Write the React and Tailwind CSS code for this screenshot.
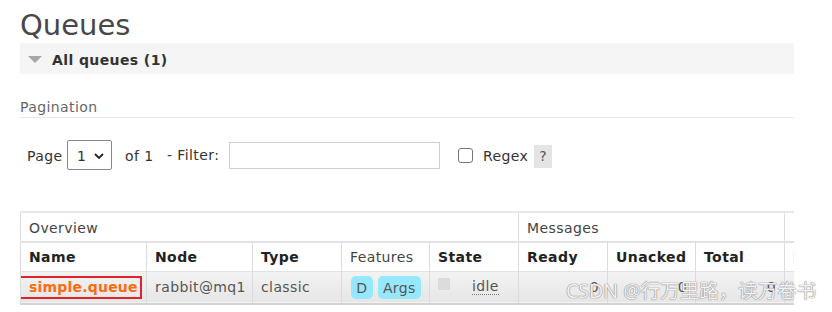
import React from 'react';

const font = "font-['DejaVu_Sans','Verdana',sans-serif]";

function Cell({ children, className = '' }) {
  return <td className={`border-x border-[#dcdcdc] px-2 align-middle ${className}`}>{children}</td>;
}

function Th({ children, bold = true, className = '', colSpan }) {
  return (
    <th
      colSpan={colSpan}
      className={`border-x border-[#dcdcdc] px-2 text-left align-middle ${bold ? 'font-bold text-[#222]' : 'font-normal text-[#444]'} ${className}`}
    >
      {children}
    </th>
  );
}

export default function App() {
  return (
    <div className={`relative w-[832px] h-[312px] overflow-hidden bg-white text-[#444] text-[14px] tracking-[0.4px] ${font}`}>
      <div className="ml-5 w-[774px] overflow-hidden">
        {/* Titulo */}
        <h1 className="h-[43px] pt-[8px] text-[29px] leading-[34px] font-normal tracking-normal text-[#484848]">Queues</h1>

        {/* Barra All queues */}
        <div className="flex items-center h-[31px] bg-[#f5f5f5] pl-2">
          <svg width="14" height="7" viewBox="0 0 14 7" className="mt-[2px]">
            <polygon points="0,0 14,0 7,7" fill="#a6a6a6" />
          </svg>
          <span className="ml-[10px] mt-[3px] font-bold text-[#333]">All queues (1)</span>
        </div>

        {/* Paginacao */}
        <div className="mt-[25px] leading-[17px] pb-[1px] border-b border-[#e6e6e6] text-[#666]">Pagination</div>

        <div className="flex items-center mt-[22px] h-[30px] pl-[7px] text-[#333]">
          <span className="w-[40px] mt-[3px]">Page</span>
          <div className="flex items-center w-[45px] h-[30px] border border-[#8a8a8a] rounded-[2px] pl-[9px]">
            <span className="mt-[2px]">1</span>
            <svg width="10" height="6" viewBox="0 0 10 6" className="ml-[8px] mt-[1px]">
              <polyline points="1,1 5,5 9,1" fill="none" stroke="#222" strokeWidth="1.8" />
            </svg>
          </div>
          <span className="w-[55px] pl-[13px] mt-[3px]">of 1</span>
          <span className="w-[62px] mt-[1px]">- Filter:</span>
          <div className="w-[211px] h-[27px] border border-[#cfcfcf] bg-white"></div>
          <div className="ml-[18px] w-[15px] h-[15px] border border-[#767676] rounded-[3px] bg-white"></div>
          <span className="ml-[10px] mt-[3px]">Regex</span>
          <span className="ml-[6px] flex items-center justify-center w-[18px] h-[23px] bg-[#e4e4e4] text-[#555] mt-[3px]">?</span>
        </div>

        {/* Tabela */}
        <table className="mt-[41px] border-collapse table-fixed w-[884px] border-t-2 border-t-[#e8e8e8]">
          <colgroup>
            <col className="w-[126px]" />
            <col className="w-[106px]" />
            <col className="w-[89px]" />
            <col className="w-[88px]" />
            <col className="w-[89px]" />
            <col className="w-[89px]" />
            <col className="w-[88px]" />
            <col className="w-[89px]" />
            <col className="w-[120px]" />
          </colgroup>
          <thead>
            <tr className="h-[30px] border-b-2 border-[#e2e2e2]">
              <Th bold={false} colSpan={5} className="pt-[2px]">Overview</Th>
              <Th bold={false} colSpan={3} className="pt-[2px]">Messages</Th>
              <Th bold={false} className="whitespace-nowrap pt-[2px]">Message rates</Th>
            </tr>
            <tr className="h-[29px] border-b border-[#e2e2e2]">
              <Th className="pt-[2px]">Name</Th>
              <Th className="pt-[2px]">Node</Th>
              <Th className="pt-[2px]">Type</Th>
              <Th bold={false} className="pt-[2px]">Features</Th>
              <Th className="pt-[2px]">State</Th>
              <Th className="pt-[2px]">Ready</Th>
              <Th className="pt-[2px]">Unacked</Th>
              <Th className="pt-[2px]">Total</Th>
              <Th className="whitespace-nowrap pt-[2px]">incoming</Th>
            </tr>
          </thead>
          <tbody>
            <tr className="h-[33px] bg-gradient-to-b from-[#f3f3f3] to-[#e6e6e6] border-b-2 border-[#d2d2d2] text-[#555]">
              <td className="border-x border-[#dcdcdc] pl-0 pr-1 align-middle">
                <div className="ml-[-2px] h-[23px] flex items-center border-2 border-[#e3212b] pl-[8px] font-bold text-[#ff6a10] whitespace-nowrap tracking-[0.2px]">
                  simple.queue
                </div>
              </td>
              <Cell>rabbit@mq1</Cell>
              <Cell>classic</Cell>
              <Cell className="pl-[9px]">
                <div className="flex items-center gap-[5px]">
                  <span className="flex items-center justify-center w-[22px] h-[23px] rounded-[5px] bg-[#96e8ff] text-[#555] pt-[2px]">D</span>
                  <span className="flex items-center justify-center w-[44px] h-[23px] rounded-[5px] bg-[#96e8ff] text-[#555] pt-[2px]">Args</span>
                </div>
              </Cell>
              <Cell>
                <div className="flex items-center">
                  <span className="w-[12px] h-[12px] bg-[#dcdcdc] mt-[-6px]"></span>
                  <span className="ml-[22px] border-b border-dotted border-[#777] leading-[15px]">idle</span>
                </div>
              </Cell>
              <Cell className="text-right">0</Cell>
              <Cell className="text-right">0</Cell>
              <Cell className="text-right">0</Cell>
              <Cell></Cell>
            </tr>
          </tbody>
        </table>
      </div>

      {/* Marca d'agua */}
      <div className="absolute left-[566px] top-[279px] text-[19.5px] leading-[24px] tracking-normal font-['Noto_Sans','Noto_Sans_CJK_SC',sans-serif] text-white/90 [text-shadow:0_0_1px_#777,0_0_1px_#777] whitespace-nowrap">
        CSDN @行万里路，读万卷书
      </div>
    </div>
  );
}
